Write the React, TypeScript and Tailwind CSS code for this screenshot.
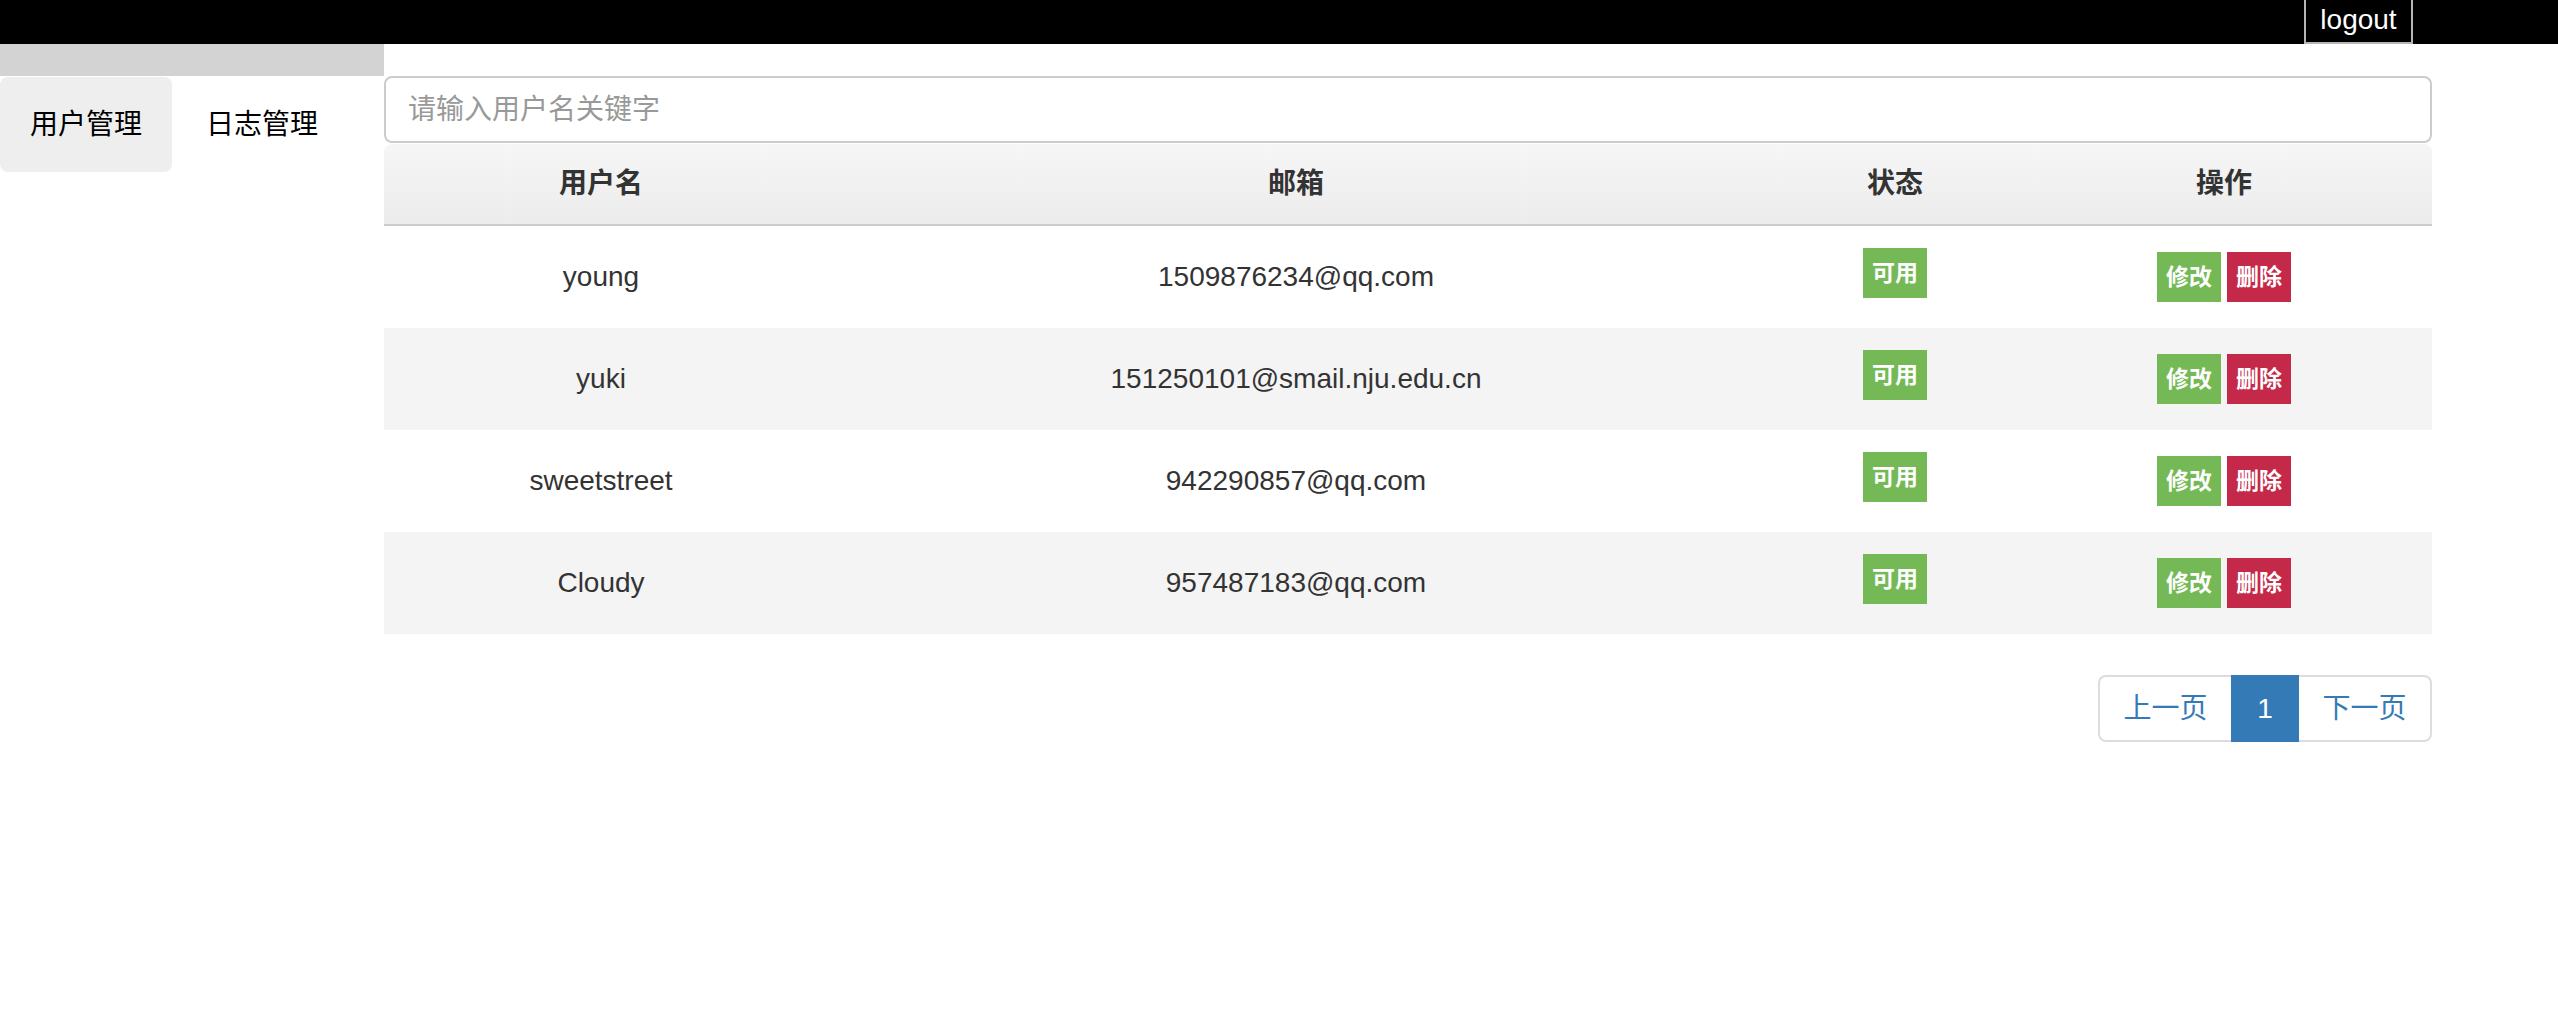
import React from "react";

type User = {
  name: string;
  email: string;
};

const users: User[] = [
  { name: "young", email: "1509876234@qq.com" },
  { name: "yuki", email: "151250101@smail.nju.edu.cn" },
  { name: "sweetstreet", email: "942290857@qq.com" },
  { name: "Cloudy", email: "957487183@qq.com" },
];

const font = { fontFamily: '"Liberation Sans", "Noto Sans CJK SC", sans-serif' };

function TopBar() {
  return (
    <div className="flex justify-end h-[44px] bg-black pr-[145px]">
      <button className="h-[44px] w-[109px] pb-[3px] border-2 border-t-0 border-[#b5b5b5] text-white text-[28px] leading-none">
        logout
      </button>
    </div>
  );
}

function Sidebar() {
  return (
    <div className="w-[384px] shrink-0">
      <div className="h-[32px] bg-[#d3d3d3]"></div>
      <ul className="flex gap-[4px] mt-[1px]">
        <li className="flex items-center h-[95px] px-[30px] rounded-[8px] bg-[#eeeeee] text-[28px] text-black">
          用户管理
        </li>
        <li className="flex items-center h-[95px] px-[30px] text-[28px] text-black">
          日志管理
        </li>
      </ul>
    </div>
  );
}

function Row({ user, striped }: { user: User; striped: boolean }) {
  return (
    <div
      className={
        "grid grid-cols-[434px_956px_242px_1fr] h-[102px] items-center text-center text-[28px] text-[#333333] " +
        (striped ? "bg-[#f4f4f4]" : "bg-white")
      }
    >
      <div>{user.name}</div>
      <div>{user.email}</div>
      <div className="flex justify-center">
        <span className="flex items-center justify-center w-[64px] h-[50px] mb-2 bg-[#74b956] text-white text-[23px] font-bold">
          可用
        </span>
      </div>
      <div className="flex justify-center gap-[6px]">
        <button className="w-[64px] h-[50px] bg-[#74b956] text-white text-[23px] font-bold">
          修改
        </button>
        <button className="w-[64px] h-[50px] bg-[#c5294a] text-white text-[23px] font-bold">
          删除
        </button>
      </div>
    </div>
  );
}

function UserTable() {
  return (
    <div className="flex-1 pt-[32px]">
      <input
        className="block w-full h-[67px] px-[22px] border-2 border-[#cccccc] rounded-[8px] text-[28px] placeholder:text-[#999999] outline-none"
        placeholder="请输入用户名关键字"
      />
      <div className="mt-[1px]">
        <div className="grid grid-cols-[434px_956px_242px_1fr] h-[82px] items-center text-center rounded-t-[8px] border-b-2 border-[#cccccc] bg-gradient-to-b from-[#f6f6f6] to-[#ececec] text-[28px] font-bold text-[#333333]">
          <div>用户名</div>
          <div>邮箱</div>
          <div>状态</div>
          <div>操作</div>
        </div>
        {users.map((u, i) => (
          <Row key={u.name} user={u} striped={i % 2 === 1} />
        ))}
      </div>
      <div className="flex justify-end mt-[41px]">
        <div className="flex h-[67px] text-[28px] text-[#337ab7]">
          <a className="flex items-center justify-center w-[133px] border-2 border-r-0 border-[#dddddd] rounded-l-[8px] bg-white">
            上一页
          </a>
          <a className="flex items-center justify-center w-[68px] bg-[#337ab7] text-white">
            1
          </a>
          <a className="flex items-center justify-center w-[133px] border-2 border-l-0 border-[#dddddd] rounded-r-[8px] bg-white">
            下一页
          </a>
        </div>
      </div>
    </div>
  );
}

export default function App() {
  return (
    <div className="min-h-[1014px] bg-white" style={font}>
      <TopBar />
      <div className="flex pr-[126px]">
        <Sidebar />
        <UserTable />
      </div>
    </div>
  );
}
